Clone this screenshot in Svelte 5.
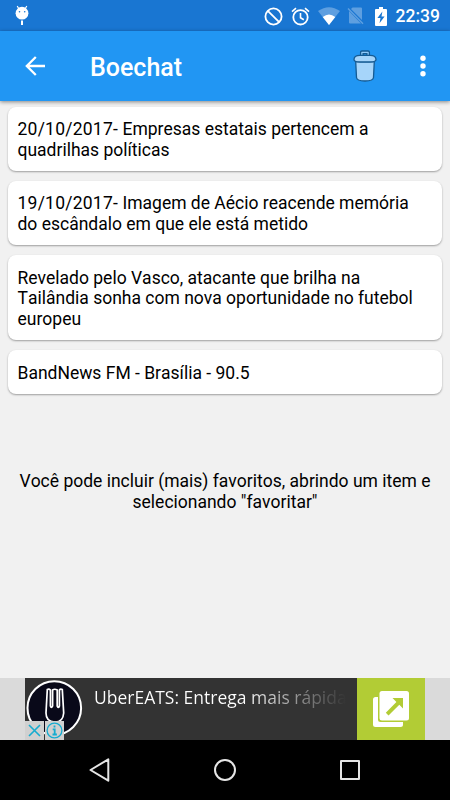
<script lang="ts">
  interface Favorite {
    id: number;
    date?: string;
    lines: string[];
  }

  const title = 'Boechat';
  const clock = '22:39';

  const favorites: Favorite[] = [
    { id: 1, date: '20/10/2017-', lines: ['Empresas estatais pertencem a', 'quadrilhas políticas'] },
    { id: 2, date: '19/10/2017-', lines: ['Imagem de Aécio reacende memória', 'do escândalo em que ele está metido'] },
    {
      id: 3,
      lines: [
        'Revelado pelo Vasco, atacante que brilha na',
        'Tailândia sonha com nova oportunidade no futebol',
        'europeu',
      ],
    },
    { id: 4, lines: ['BandNews FM - Brasília - 90.5'] },
  ];
</script>

<div class="screen">
  <div class="status-bar">
    <svg class="droid" width="14" height="21" viewBox="0 0 14 21">
      <path d="M2.2 1 4 4M11.8 1 10 4" stroke="#fff" stroke-width="1.2" />
      <circle cx="7" cy="8.2" r="6.4" fill="#fff" />
      <circle cx="4.5" cy="6.8" r=".8" fill="#1976d2" />
      <circle cx="9.7" cy="6.8" r=".8" fill="#1976d2" />
      <path d="M7 15.5V20" stroke="#fff" stroke-width="2" />
    </svg>
    <div class="status-icons">
      <svg width="19" height="19" viewBox="0 0 19 19" fill="none" stroke="#fff" stroke-width="1.8">
        <circle cx="9.5" cy="9.5" r="8.1" />
        <path d="m3.8 3.8 11.4 11.4" />
      </svg>
      <svg width="19" height="19" viewBox="0 0 19 19" fill="none" stroke="#fff" stroke-width="1.8">
        <circle cx="9.5" cy="10.3" r="7.2" />
        <path d="M9.5 6v4.7l3.3 2M1 4.6 5 1.2M18 4.6 14 1.2" stroke-width="1.6" />
      </svg>
      <svg class="wifi" width="22" height="18" viewBox="0 0 22 18">
        <path d="M0 4Q11-3.6 22 4L11 18Z" fill="#5e9fe0" />
        <path d="M4.7 10q6.3-5 12.6 0L11 18Z" fill="#fff" />
      </svg>
      <svg class="sim" width="17" height="18" viewBox="0 0 17 18">
        <path d="M5.5.5H14q1 0 1 1V13L4 2ZM2 4l12 12.5H3q-1 0-1-1Z" fill="#5e9fe0" />
        <path d="m1 1.5 15 15.3" stroke="#5e9fe0" stroke-width="1.4" />
      </svg>
      <svg class="battery" width="12" height="19" viewBox="0 0 12 19">
        <path d="M4 0h4v2h3q1 0 1 1v15q0 1-1 1H1q-1 0-1-1V3q0-1 1-1h3Z" fill="#fff" />
        <path d="M7.4 4.5 2.4 11h3.1l-1 5.2L9.6 9.5H6.5Z" fill="#1976d2" />
      </svg>
      <span class="clock">{clock}</span>
    </div>
  </div>

  <header class="toolbar">
    <svg width="20" height="20" viewBox="0 0 20 20" fill="none" stroke="#fff" stroke-width="2.3">
      <path d="M20 10H2M10.8 1 1.8 10l9 9" />
    </svg>
    <h1>{title}</h1>
    <svg class="trash" width="24" height="32" viewBox="0 0 24 32" stroke="#155b93" stroke-width="1.3">
      <path d="M7.6 6V2.3Q7.6 1 8.9 1h6.2q1.3 0 1.3 1.3V6h-2.5V3.6h-3.8V6Z" fill="#90caf9" />
      <path d="M2.7 11.5h18.6l-.8 16q-.2 3.5-8.5 3.5t-8.5-3.5Z" fill="#a6d5fa" />
      <path d="M1 9.5Q1 5.4 7 5.4h10q6 0 6 4.1Q23 12 17 12H7Q1 12 1 9.5Z" fill="#a6d5fa" />
    </svg>
    <svg class="more" width="6" height="22" viewBox="0 0 6 22" fill="#fff">
      <circle cx="3" cy="3.3" r="2.7" />
      <circle cx="3" cy="11" r="2.7" />
      <circle cx="3" cy="18.7" r="2.7" />
    </svg>
  </header>

  <main>
    <ul>
      {#each favorites as favorite (favorite.id)}
        <li class="card">
          {#each favorite.lines as line, i}
            <div>{#if i === 0 && favorite.date}<span class="date">{favorite.date}</span>{' '}{/if}{line}</div>
          {/each}
        </li>
      {/each}
    </ul>
    <p class="hint">Você pode incluir (mais) favoritos, abrindo um item e<br />selecionando "favoritar"</p>
  </main>

  <div class="ad-strip">
    <div class="ad">
      <div class="ad-logo">
        <svg width="60" height="62" viewBox="0 0 60 62" fill="none" stroke="#fff">
          <circle cx="29.3" cy="30" r="26.8" fill="#090919" stroke-width="2" />
          <path
            d="M22.3 11.5 21 35Q21 43.5 29.5 44T38.7 35L37.3 11.5Q35.5 10.5 34.4 12V28Q33.7 31 32.2 28V12Q29.7 10.5 27.6 12V28Q26.3 31 25.4 28V12Q24 10.5 22.3 11.5Z"
            stroke-width="1.7"
          />
        </svg>
        <div class="ad-choices">
          <span>
            <svg width="13" height="13" viewBox="0 0 13 13" stroke="#16acd0" stroke-width="1.6">
              <path d="m1 1 11 11M12 1 1 12" />
            </svg>
          </span>
          <span>
            <svg width="17" height="17" viewBox="0 0 17 17" fill="none" stroke="#16acd0">
              <circle cx="8.5" cy="8.5" r="7.4" stroke-width="1.3" />
              <path d="M6.7 7.3h2v5M6.5 12.5h4.4M8.5 3.5v2" stroke-width="1.8" />
            </svg>
          </span>
        </div>
      </div>
      <div class="ad-text">UberEATS: Entrega mais rápida</div>
      <div class="ad-action">
        <svg width="36" height="36" viewBox="0 0 36 36">
          <rect x="0" y="6" width="30" height="30" rx="2.5" fill="#fff" />
          <rect x="5" y="-1" width="32" height="32" rx="2.5" fill="#b2cc35" />
          <rect x="6.5" y="0" width="29.5" height="29.5" rx="2.5" fill="#fff" />
          <path d="M19.5 7H30v10.5l-3.7-3.7L15.5 24.4l-2.7-2.7 10.6-10.8Z" fill="#b2cc35" />
        </svg>
      </div>
    </div>
  </div>

  <nav>
    <svg width="22" height="26" viewBox="0 0 22 26">
      <path d="M19.3 2.3v21.4L1.5 13Z" />
    </svg>
    <svg width="24" height="26" viewBox="0 0 24 26">
      <circle cx="12" cy="13" r="10" />
    </svg>
    <svg width="22" height="26" viewBox="0 0 22 26">
      <rect x="2" y="4" width="18" height="18" />
    </svg>
  </nav>
</div>

<style>
  :global(body) { margin: 0; }

  .screen {
    width: 450px;
    height: 800px;
    display: flex;
    flex-direction: column;
    overflow: hidden;
    background: #f1f1f1;
    color: #000;
    font-family: Roboto, sans-serif;
  }

  svg { display: block; flex: none; }

  .status-bar {
    height: 31px;
    box-sizing: border-box;
    padding: 1px 10px 0 15px;
    display: flex;
    align-items: center;
    justify-content: space-between;
    background: #1976d2;
  }
  .droid { margin-top: -1px; }
  .status-icons { display: flex; align-items: center; }
  .status-icons svg { margin-right: 8px; }
  .status-icons .wifi { margin-right: 7px; }
  .status-icons .sim { margin-right: 11px; }
  .status-icons .battery { margin-right: 9px; }
  .clock { font-size: 17.5px; font-weight: 500; line-height: 20px; color: #fff; }

  .toolbar {
    height: 70px;
    flex: none;
    box-sizing: border-box;
    padding: 0 24px 0 25px;
    display: flex;
    align-items: center;
    background: #2196f3;
    box-shadow: 0 1px 4px rgba(0, 0, 0, 0.45);
    z-index: 1;
  }
  h1 {
    margin: 3px auto 0 45px;
    font-size: 25px;
    font-weight: 500;
    line-height: 30px;
    color: #fff;
  }
  .trash { margin-right: 43px; }

  main {
    flex: 1;
    padding: 5.5px 8px 0;
    font-size: 17.5px;
    line-height: 20.8px;
    font-kerning: none;
  }
  ul { margin: 0; padding: 0; list-style: none; display: flex; flex-direction: column; gap: 10px; }
  .card {
    padding: 12.6px 9.5px 10.1px;
    background: #fff;
    border-radius: 8px;
    box-shadow: 0 1px 2px rgba(0, 0, 0, 0.35);
    white-space: nowrap;
  }
  .date { letter-spacing: 0.24px; }
  .hint { margin: 77.3px 0 0; text-align: center; white-space: nowrap; }

  .ad-strip {
    height: 62px;
    display: flex;
    justify-content: center;
    background: #dadada;
  }
  .ad { width: 400px; display: flex; background: #333; }
  .ad-logo { position: relative; width: 60px; height: 62px; }
  .ad-choices { position: absolute; left: 0; bottom: 0; display: flex; gap: 1px; }
  .ad-choices span {
    width: 19px;
    height: 19px;
    display: flex;
    align-items: center;
    justify-content: center;
    background: #d0d0d0;
  }
  .ad-text {
    width: 272px;
    box-sizing: border-box;
    padding: 7px 0 0 9px;
    overflow: hidden;
    white-space: nowrap;
    font: 17.5px/25px 'Open Sans', sans-serif;
    color: transparent;
    background: linear-gradient(90deg, #fff 58%, #333 96%);
    background-clip: text;
    -webkit-background-clip: text;
  }
  .ad-action {
    flex: 1;
    display: flex;
    align-items: center;
    justify-content: center;
    background: #b2cc35;
  }

  nav {
    height: 60px;
    box-sizing: border-box;
    padding: 0 89px;
    display: flex;
    align-items: center;
    justify-content: space-between;
    background: #000;
  }
  nav svg { fill: none; stroke: #e6e6e6; stroke-width: 2; stroke-linejoin: round; }
</style>
